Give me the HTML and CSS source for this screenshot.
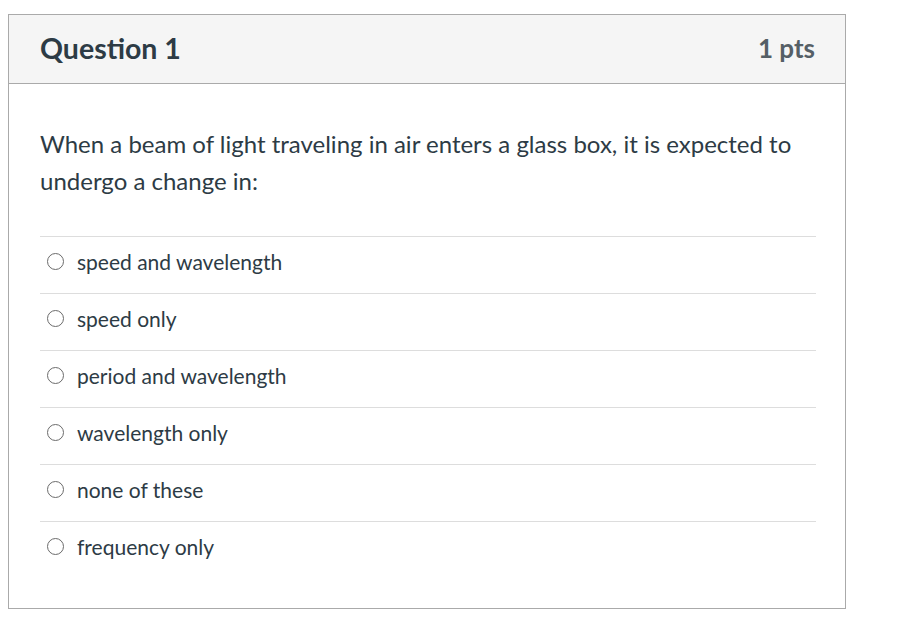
FILE: index.html
```html
<!DOCTYPE html>
<html>
<head>
<meta charset="utf-8">
<link rel="stylesheet" href="styles.css">
</head>
<body>
<div class="card">
  <div class="header">
    <h2 class="title">Question 1</h2>
    <span class="pts">1 pts</span>
  </div>
  <div class="body">
    <p class="question">When a beam of light traveling in air enters a glass box, it is expected to undergo a change in:</p>
    <div class="answers">
      <label class="answer"><span class="radio"></span><span>speed and wavelength</span></label>
      <label class="answer"><span class="radio"></span><span>speed only</span></label>
      <label class="answer"><span class="radio"></span><span>period and wavelength</span></label>
      <label class="answer"><span class="radio"></span><span>wavelength only</span></label>
      <label class="answer"><span class="radio"></span><span>none of these</span></label>
      <label class="answer"><span class="radio"></span><span>frequency only</span></label>
    </div>
  </div>
</div>
</body>
</html>
```

FILE: styles.css
```css
body {
  margin: 0;
  padding: 14px 8px;
  background: #fff;
  font-family: Lato, "Liberation Sans", sans-serif;
  color: #2d3b45;
}
.card {
  width: 836px;
  border: 1px solid #aaaaaa;
  background: #fff;
}
.header {
  display: flex;
  justify-content: space-between;
  align-items: center;
  height: 65px;
  padding: 0 30px 3px 31px;
  background: #f5f5f5;
  border-bottom: 1px solid #aaaaaa;
}
.title {
  margin: 0;
  font-size: 28.5px;
  font-weight: bold;
  color: #2d3b45;
}
.pts {
  font-size: 26px;
  font-weight: bold;
  color: #555f66;
}
.body {
  padding: 41px 29px 30px 31px;
}
.question {
  margin: 0 0 37px;
  font-size: 24px;
  line-height: 37px;
  color: #2d3b45;
}
.answers {
  display: flex;
  flex-direction: column;
}
.answer {
  display: flex;
  align-items: center;
  height: 49px;
  padding-bottom: 7px;
  border-top: 1px solid #dddddd;
  font-size: 21px;
  color: #2d3b45;
}
.radio {
  width: 17px;
  height: 17px;
  border: 1.5px solid #6b6b6b;
  border-radius: 50%;
  margin: 0 13px 0 7px;
  box-sizing: border-box;
  flex: none;
}
```
